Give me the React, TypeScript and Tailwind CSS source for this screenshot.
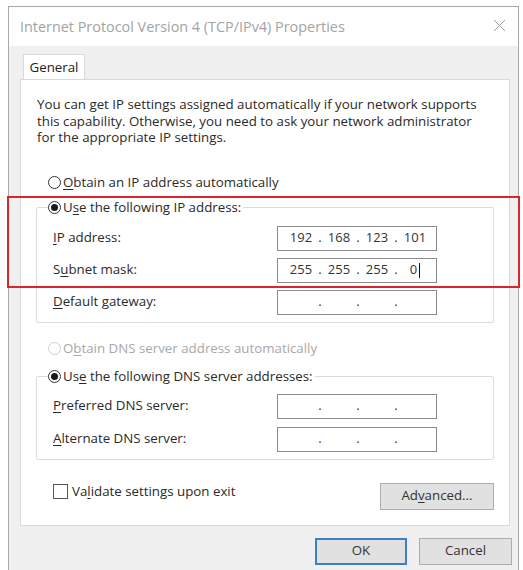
import React from "react";

const U = ({ children }: { children: React.ReactNode }) => (
  <span className="underline underline-offset-2">{children}</span>
);

function Radio({ checked, disabled }: { checked?: boolean; disabled?: boolean }) {
  return (
    <span
      className={`flex h-[13px] w-[13px] shrink-0 items-center justify-center rounded-full border bg-white ${
        disabled ? "border-[#cfcfcf]" : "border-[#333]"
      }`}
    >
      {checked && <span className="h-[7px] w-[7px] rounded-full bg-[#1a1a1a]" />}
    </span>
  );
}

function IpBox({ parts = ["", "", "", ""], caret }: { parts?: string[]; caret?: boolean }) {
  return (
    <div className="flex h-[25px] w-[160px] items-center border border-[#8a8a8a] bg-white pl-[6px] text-[13px] text-[#333]">
      {parts.map((p, i) => (
        <React.Fragment key={i}>
          <span className="flex w-[34px] items-center justify-center">
            {p}
            {caret && i === 3 && <span className="ml-[2px] h-[15px] w-[1px] bg-[#111]" />}
          </span>
          {i < 3 && <span className="w-[4px] text-center">.</span>}
        </React.Fragment>
      ))}
    </div>
  );
}

function Row({ label, children }: { label: React.ReactNode; children: React.ReactNode }) {
  return (
    <div className="flex h-[25px] items-center pl-[16px]">
      <span className="w-[224px]">{label}</span>
      {children}
    </div>
  );
}

export default function App() {
  return (
    <div className="relative h-[570px] w-[523px] overflow-hidden bg-white pl-[8px] pt-[6px] font-['Open_Sans','Noto_Sans',sans-serif] text-[13.3px] text-[#2a2a2a]">
      {/* dialog window */}
      <div className="w-[511px] border border-[#a9a9a9] bg-[#f0f0f0]">
        {/* title bar */}
        <div className="flex h-[39px] items-center justify-between bg-white pl-[11px] pr-[11px]">
          <span className="text-[14.4px] text-[#a3a3a3]">Internet Protocol Version 4 (TCP/IPv4) Properties</span>
          <svg width="13" height="13" viewBox="0 0 13 13" className="-mt-[3px] mr-[1px]">
            <path d="M1 1 L12 12 M12 1 L1 12" stroke="#a0a0a0" strokeWidth="1" />
          </svg>
        </div>

        <div className="pl-[11px] pr-[8px] pt-[8px]">
          {/* tab */}
          <div className="ml-[3px] flex h-[26px] w-[62px] items-center justify-center border border-b-0 border-[#d9d9d9] bg-white text-[#222]">
            General
          </div>

          {/* panel */}
          <div className="-mt-[1px] border border-[#d9d9d9] bg-white px-[15px] pb-[15px] pt-[16px]">
            <p className="ml-[1px] leading-[16.5px]">
              You can get IP settings assigned automatically if your network supports
              <br />
              this capability. Otherwise, you need to ask your network administrator
              <br />
              for the appropriate IP settings.
            </p>

            <div className="ml-[12px] mt-[29px] flex h-[16px] items-center gap-[2px]">
              <Radio />
              <span>
                <U>O</U>btain an IP address automatically
              </span>
            </div>

            <fieldset className="mt-[9px] rounded-[2px] border border-[#dcdcdc] pb-[7px]">
              <legend className="ml-[11px] flex h-[16px] items-center gap-[2px] bg-white pr-[2px]">
                <Radio checked />
                <span>
                  U<U>s</U>e the following IP address:
                </span>
              </legend>
              <div className="flex flex-col gap-[7px] pt-[10px]">
                <Row label={<><U>I</U>P address:</>}>
                  <IpBox parts={["192", "168", "123", "101"]} />
                </Row>
                <Row label={<>S<U>u</U>bnet mask:</>}>
                  <IpBox parts={["255", "255", "255", "0"]} caret />
                </Row>
                <Row label={<><U>D</U>efault gateway:</>}>
                  <IpBox />
                </Row>
              </div>
            </fieldset>

            <div className="ml-[12px] mt-[18px] flex h-[16px] items-center gap-[2px] text-[#a8a8a8]">
              <Radio disabled />
              <span>
                O<U>b</U>tain DNS server address automatically
              </span>
            </div>

            <fieldset className="mt-[12px] rounded-[2px] border border-[#dcdcdc] pb-[7px]">
              <legend className="ml-[11px] flex h-[16px] items-center gap-[2px] bg-white pr-[2px]">
                <Radio checked />
                <span>
                  Us<U>e</U> the following DNS server addresses:
                </span>
              </legend>
              <div className="flex flex-col gap-[8px] pt-[9px]">
                <Row label={<><U>P</U>referred DNS server:</>}>
                  <IpBox />
                </Row>
                <Row label={<><U>A</U>lternate DNS server:</>}>
                  <IpBox />
                </Row>
              </div>
            </fieldset>

            <div className="mt-[23px] flex items-start justify-between">
              <div className="ml-[17px] mt-[1px] flex h-[16px] items-center gap-[4px]">
                <span className="h-[15px] w-[15px] border border-[#555] bg-white" />
                <span>
                  Va<U>l</U>idate settings upon exit
                </span>
              </div>
              <button className="h-[27px] w-[114px] border border-[#adadad] bg-[#e1e1e1] text-[#333]">
                Ad<U>v</U>anced...
              </button>
            </div>
          </div>

          {/* footer buttons */}
          <div className="flex justify-end gap-[12px] pb-[10px] pt-[12px]">
            <button className="h-[27px] w-[92px] border-2 border-[#3c7fc4] bg-[#e1e1e1] text-[#333]">OK</button>
            <button className="-mr-[2px] h-[27px] w-[93px] border border-[#adadad] bg-[#e1e1e1] text-[#333]">
              Cancel
            </button>
          </div>
        </div>
      </div>

      {/* red highlight annotation */}
      <div className="pointer-events-none absolute left-[7px] top-[196px] h-[92px] w-[513px] border-2 border-[#d8262c]" />
    </div>
  );
}
